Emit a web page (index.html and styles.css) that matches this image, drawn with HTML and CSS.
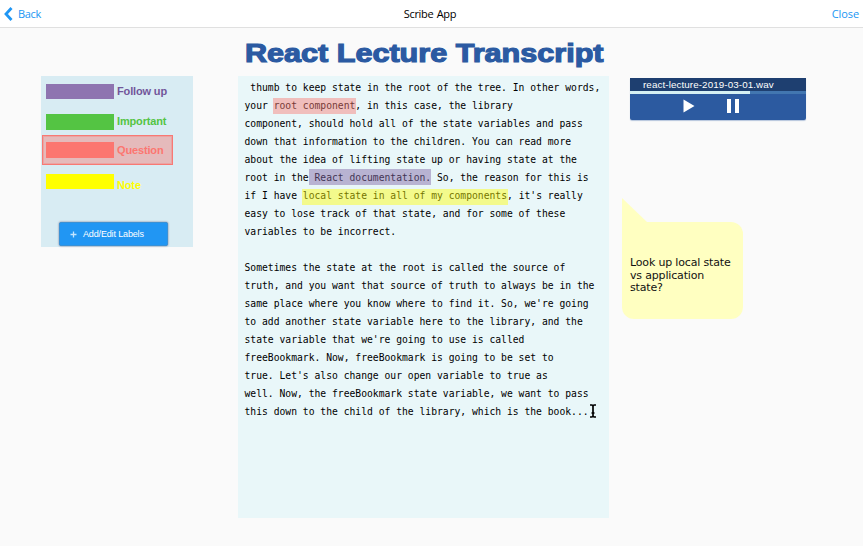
FILE: index.html
```html
<!DOCTYPE html>
<html lang="en">
<head>
<meta charset="utf-8">
<title>Scribe App</title>
<link rel="stylesheet" href="styles.css">
</head>
<body>
<header class="topbar">
  <a class="back"><svg width="9" height="14" viewBox="0 0 9 14"><path d="M7.5 1 2 7l5.500 6" fill="none" stroke="#1f96f4" stroke-width="2.800"/></svg><span>Back</span></a>
  <span class="app-name">Scribe App</span>
  <a class="close">Close</a>
</header>
<main class="board">
  <aside class="labels">
    <div class="label follow"><i class="swatch"></i><span>Follow up</span></div>
    <div class="label important"><i class="swatch"></i><span>Important</span></div>
    <div class="label question"><i class="swatch"></i><span>Question</span></div>
    <div class="label note"><i class="swatch"></i><span>Note</span></div>
    <button class="add"><svg width="7" height="7" viewBox="0 0 7 7"><path d="M3.500 .5v6M.5 3.500h6" stroke="#c4e5ff" stroke-width="1.300"/></svg><span>Add/Edit Labels</span></button>
  </aside>
  <section class="center">
    <h1 class="title"><svg width="366" height="48" viewBox="0 0 366 48"><text x="1" y="33.700" textLength="358.500" lengthAdjust="spacingAndGlyphs">React Lecture Transcript</text></svg></h1>
    <article class="transcript">
      <div class="line"> thumb to keep state in the root of the tree. In other words,</div>
      <div class="line">your <span class="hl hl-question">root component</span>, in this case, the library</div>
      <div class="line">component, should hold all of the state variables and pass</div>
      <div class="line">down that information to the children. You can read more</div>
      <div class="line">about the idea of lifting state up or having state at the</div>
      <div class="line">root in the<span class="hl hl-follow"> React documentation.</span> So, the reason for this is</div>
      <div class="line">if I have <span class="hl hl-note">local state in all of my components</span>, it's really</div>
      <div class="line">easy to lose track of that state, and for some of these</div>
      <div class="line">variables to be incorrect.</div>
      <div class="line gap">Sometimes the state at the root is called the source of</div>
      <div class="line">truth, and you want that source of truth to always be in the</div>
      <div class="line">same place where you know where to find it. So, we're going</div>
      <div class="line">to add another state variable here to the library, and the</div>
      <div class="line">state variable that we're going to use is called</div>
      <div class="line">freeBookmark. Now, freeBookmark is going to be set to</div>
      <div class="line">true. Let's also change our open variable to true as</div>
      <div class="line">well. Now, the freeBookmark state variable, we want to pass</div>
      <div class="line last">this down to the child of the library, which is the book...<svg class="cursor" width="8" height="14" viewBox="0 0 8 14"><path d="M1 1h2l1 1 1-1h2M1 13h2l1-1 1 1h2M4 2v10M2.500 9h3" fill="none" stroke="#000" stroke-width="1.700"/></svg></div>
    </article>
  </section>
  <aside class="side">
    <div class="player">
      <div class="track">react-lecture-2019-03-01.wav</div>
      <div class="progress"><div class="played"></div></div>
      <div class="controls">
        <svg width="12" height="14" viewBox="0 0 12 14"><path d="M.5 .5 11.500 7 .5 13.500z" fill="#fff"/></svg>
        <svg width="13" height="14" viewBox="0 0 13 14"><path d="M0 0h4v14H0zM8 0h4v14H8z" fill="#fff"/></svg>
      </div>
    </div>
    <div class="bubble">
      <svg class="tail" width="25" height="24" viewBox="0 0 25 24"><path d="M0 0 25 24H0z" fill="#ffffc1"/></svg>
      <p>Look up local state<br>vs application<br>state?</p>
    </div>
  </aside>
</main>
</body>
</html>
```
FILE: styles.css
```css
* { box-sizing: border-box; }
body { margin: 0; height: 546px; overflow: hidden; background: #fafafa; font-family: "Liberation Sans", Arial, sans-serif; }
svg { display: block; flex: none; }
.topbar { height: 28px; display: grid; grid-template-columns: 1fr auto 1fr; align-items: center; padding: 0 4px; background: #fff; border-bottom: 1px solid #e0e0e0; font: 11px/27px "Open Sans", sans-serif; letter-spacing: -.35px; word-spacing: 1px; color: #000; }
.back { display: flex; align-items: center; gap: 5px; color: #2196f3; letter-spacing: -.3px; }
.app-name { margin-right: 3px; }
.close { text-align: right; color: #2196f3; letter-spacing: -.1px; }

.board { display: grid; grid-template-columns: 197px 371px 13px 184px; padding-left: 41px; align-items: start; }
.labels { width: 152px; height: 171px; margin-top: 48px; background: #d8ecf3; display: flex; flex-direction: column; padding: 8px 0 0 1px; }
.label { display: flex; align-items: flex-start; gap: 3px; padding-left: 4px; font-weight: bold; font-size: 11px; line-height: 15px; letter-spacing: -.15px; }
.swatch { width: 68px; height: 15px; background: currentColor; }
.follow { color: #8e74b0; height: 30px; }
.follow span { color: #72569a; }
.important { color: #54c443; height: 21px; }
.important .swatch { height: 16px; }
.question { width: 131px; height: 30px; padding: 6px 0 0 3px; border: 1px solid #f87974; outline: 1px solid #f8797455; outline-offset: -2px; background: #e5babb; color: #fc7670; }
.question .swatch { height: 16px; }
.question span { padding-top: 1px; }
.note { color: #ff0; padding-top: 9px; height: 57px; }
.note span { padding-top: 4px; }
.add { width: 109px; height: 24px; margin: 0 0 0 17px; padding: 0 0 0 10px; border: 1px solid #3b91d5; border-radius: 2px; background: #2196f3; box-shadow: 0 0 2px #668; color: #fff; font: 9px "Liberation Sans", Arial, sans-serif; letter-spacing: -.15px; display: flex; align-items: center; gap: 6px; white-space: nowrap; }

.title { margin: 0 0 0 6px; height: 48px; }
.title text { font: 900 26px "Liberation Sans", Arial, sans-serif; fill: #2b5aa2; stroke: #2b5aa2; stroke-width: 1.2px; }
.transcript { width: 371px; height: 442px; padding: 3px 0 0 6.500px; background: #e9f7f9; font: 9.700px/18px "DejaVu Sans Mono", monospace; color: #000; }
.line { height: 18px; white-space: pre; }
.gap { margin-top: 18px; }
.hl { position: relative; }
.hl::after { content: ""; position: absolute; inset: -2px -1px auto -1px; height: 16px; }
.hl-question::after { background: #f8797475; }
.hl-follow::after { background: #8468a87a; left: 0; right: 0; top: -3px; }
.hl-note::after { background: #ffff0070; top: -1px; }
.last { display: flex; align-items: center; }
.cursor { margin-top: -3px; }

.side { grid-column: 4; display: flex; flex-direction: column; padding-left: 8px; }
.player { width: 176px; height: 42px; margin-top: 50px; border-radius: 0 0 2px 2px; background: #2c5aa0; box-shadow: 0 1px 1px #b5c5dc; overflow: hidden; }
.track { height: 13px; padding-left: 13px; background: #1e3f70; color: #fff; font-size: 9.800px; letter-spacing: .1px; line-height: 13px; white-space: nowrap; }
.progress { height: 3px; background: #4276b0; }
.played { width: 120px; height: 3px; background: #d5f0f3; }
.controls { display: flex; gap: 32px; padding: 5px 0 0 53px; }
.bubble { position: relative; width: 121px; height: 97px; margin: 102px 0 0 -8px; padding: 35px 0 0 8px; border-radius: 0 12px 12px 12px; background: #ffffc1; }
.bubble p { margin: 0; font: 11px/12.500px "DejaVu Sans", sans-serif; letter-spacing: -.17px; color: #111; white-space: nowrap; }
.tail { position: absolute; left: 0; top: -24px; }
```
